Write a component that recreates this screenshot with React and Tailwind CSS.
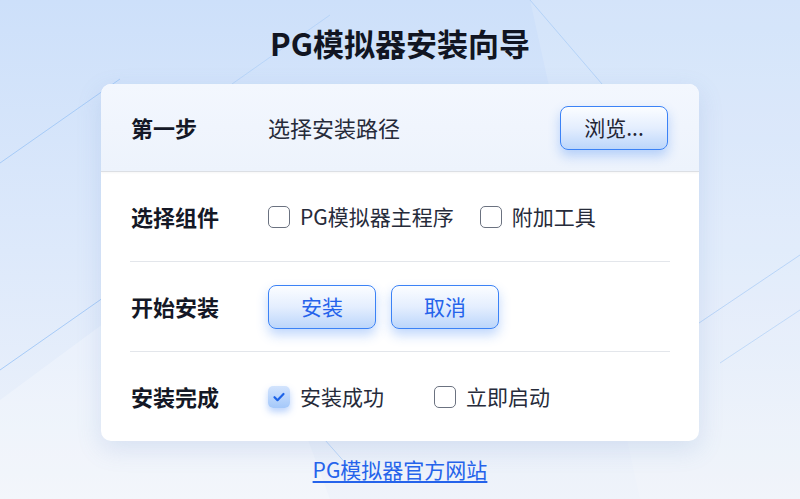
import { useState } from "react";

const FONT = { fontFamily: '"Noto Sans CJK SC", "Noto Sans", sans-serif' };

function Checkbox({ checked, onChange, label }) {
  return (
    <label className="flex items-center gap-[10px] cursor-pointer select-none">
      <span
        onClick={onChange}
        className={`flex h-[22px] w-[22px] items-center justify-center rounded-[5px] ${
          checked
            ? "bg-gradient-to-b from-[#d3e4fd] to-[#a4c8fa] shadow-[0_4px_7px_rgba(59,130,246,0.35)]"
            : "border-[1.5px] border-[#6b7280] bg-white"
        }`}
      >
        {checked && (
          <svg width="16" height="16" viewBox="0 0 16 16" fill="none">
            <path
              d="M3.5 8.2l3 3L12.5 5"
              stroke="#1d63e8"
              strokeWidth="2.2"
              strokeLinecap="round"
              strokeLinejoin="round"
            />
          </svg>
        )}
      </span>
      <span className="text-[21px] text-[#262b3a]">{label}</span>
    </label>
  );
}

function Button({ children, dark }) {
  return (
    <button
      className={`h-[44px] w-[108px] rounded-[8px] border-[1.5px] border-[#3b82f6] bg-gradient-to-b from-[#fbfdff] via-[#e4eefe] to-[#bcd6fb] text-[21px] shadow-[0_6px_12px_rgba(59,130,246,0.32)] ${
        dark ? "text-[#1f2433]" : "text-[#2563eb]"
      }`}
    >
      {children}
    </button>
  );
}

function Row({ label, children }) {
  return (
    <div className="flex h-[89px] items-center px-[30px]">
      <div className="w-[137px] text-[22px] font-bold text-[#141826]">{label}</div>
      <div className="flex flex-1 items-center">{children}</div>
    </div>
  );
}

export default function App() {
  const [main, setMain] = useState(false);
  const [extra, setExtra] = useState(false);
  const [done, setDone] = useState(true);
  const [launch, setLaunch] = useState(false);

  return (
    <div
      style={FONT}
      className="relative flex h-[499px] w-[800px] flex-col items-center overflow-hidden bg-gradient-to-b from-[#cde0fa] via-[#dde9fb] to-[#eff3fa]"
    >
      {/* background decoration */}
      <svg className="absolute inset-0" width="800" height="499" viewBox="0 0 800 499">
        <polygon points="530,0 800,0 800,499 640,499" fill="#ffffff" opacity="0.14" />
        <polygon points="0,400 230,230 330,499 0,499" fill="#ffffff" opacity="0.25" />
        <g stroke="#a7cbf7" strokeWidth="1" fill="none">
          <line x1="0" y1="163" x2="120" y2="79" />
          <line x1="232" y1="84" x2="330" y2="15" opacity="0.6" />
          <line x1="530" y1="0" x2="602" y2="84" opacity="0.7" />
          <line x1="0" y1="370" x2="110" y2="293" />
          <line x1="699" y1="323" x2="800" y2="255" opacity="0.7" />
          <line x1="720" y1="363" x2="800" y2="310" opacity="0.6" />
          <line x1="325" y1="440" x2="348" y2="466" opacity="0.7" />
        </g>
      </svg>

      <h1 className="relative mt-[22px] text-[31px] font-bold leading-[42px] text-[#111522]">
        PG模拟器安装向导
      </h1>

      <div className="relative mt-[20px] w-[598px] overflow-hidden rounded-[10px] bg-white shadow-[0_8px_24px_rgba(100,140,200,0.18)]">
        <div className="flex h-[88px] items-center border-b border-[#dcdfe4] bg-gradient-to-b from-[#f3f7fe] to-[#edf3fc] px-[30px] shadow-[0_1px_2px_rgba(0,0,0,0.04)]">
          <div className="w-[137px] text-[22px] font-bold text-[#141826]">第一步</div>
          <div className="flex-1 text-[22px] text-[#262b3a]">选择安装路径</div>
          <div className="mr-[1px]">
            <Button dark>浏览...</Button>
          </div>
        </div>

        <Row label="选择组件">
          <div className="flex items-center gap-[26px]">
            <Checkbox checked={main} onChange={() => setMain(!main)} label="PG模拟器主程序" />
            <Checkbox checked={extra} onChange={() => setExtra(!extra)} label="附加工具" />
          </div>
        </Row>
        <div className="mx-[29px] h-px bg-[#e3e6eb]" />

        <Row label="开始安装">
          <div className="flex items-center gap-[15px]">
            <Button>安装</Button>
            <Button>取消</Button>
          </div>
        </Row>
        <div className="mx-[29px] h-px bg-[#e3e6eb]" />

        <Row label="安装完成">
          <div className="flex items-center gap-[50px]">
            <Checkbox checked={done} onChange={() => setDone(!done)} label="安装成功" />
            <Checkbox checked={launch} onChange={() => setLaunch(!launch)} label="立即启动" />
          </div>
        </Row>
      </div>

      <a href="#" className="relative mt-[13px] text-[21px] text-[#2563eb] underline decoration-[1.5px] underline-offset-[3px]">
        PG模拟器官方网站
      </a>
    </div>
  );
}
